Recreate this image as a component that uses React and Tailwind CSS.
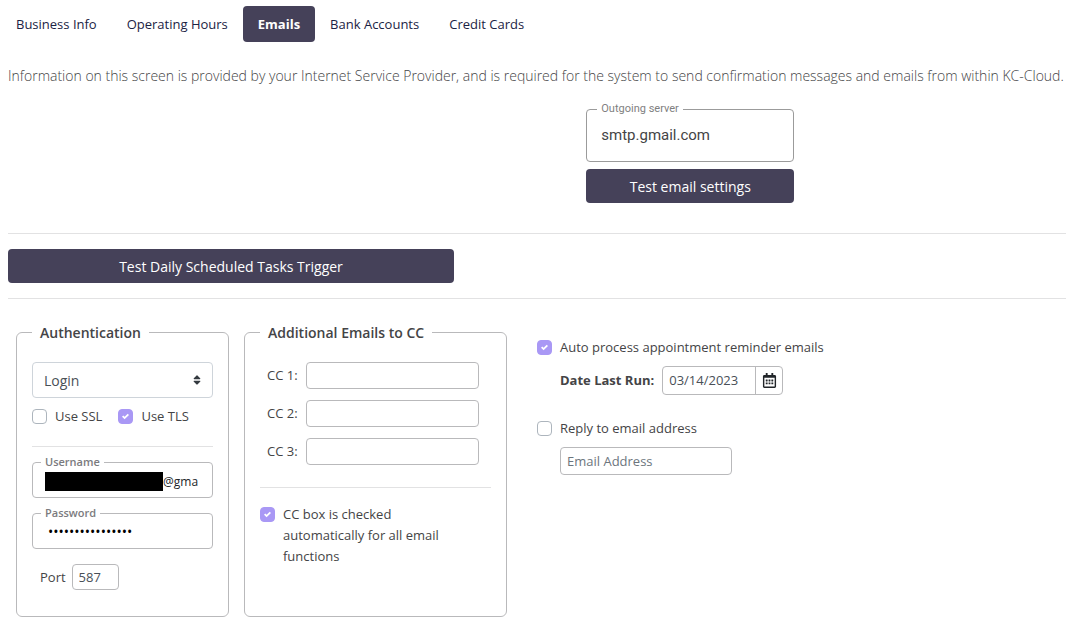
import React, { useState } from "react";
import clsx from "clsx";
import { FaRegCalendarAlt, FaSort } from "react-icons/fa";

const tabs = [
  "Business Info",
  "Operating Hours",
  "Emails",
  "Bank Accounts",
  "Credit Cards",
];

const inputStyle = "rounded border border-[#b9b9bb] bg-white px-1.5 text-[#495057]";

const Checkbox = ({ id, label, defaultChecked = false }) => {
  const [checked, setChecked] = useState(defaultChecked);

  return (
    <div className="flex items-start gap-2">
      <span className="mt-[3px] grid size-[15px] shrink-0 place-items-center">
        <input
          id={id}
          type="checkbox"
          checked={checked}
          onChange={() => setChecked(!checked)}
          className="size-[15px] appearance-none rounded border border-[#adb5bd] bg-white [grid-area:1/1] checked:border-[#a998f5] checked:bg-[#a998f5]"
        />
        {checked && (
          <svg
            viewBox="0 0 8 8"
            className="pointer-events-none size-[7px] fill-white [grid-area:1/1]"
          >
            <path d="M6.564.75l-3.59 3.612-1.538-1.55L0 4.26 2.974 7.25 8 2.193z" />
          </svg>
        )}
      </span>
      <label htmlFor={id}>{label}</label>
    </div>
  );
};

const Group = ({ title, className, children }) => (
  <fieldset
    className={clsx("rounded-md border border-[#b9b9bb] px-[15px]", className)}
  >
    <legend className="px-2 pt-0.5 text-[14px] leading-6 font-semibold">
      {title}
    </legend>
    {children}
  </fieldset>
);

const Outlined = ({ title, className, children }) => (
  <fieldset className={clsx("rounded border border-[#b9b9bb] px-2", className)}>
    <legend className="px-1 text-[11px] leading-[18px] font-semibold text-[#7b7b7e]">
      {title}
    </legend>
    {children}
  </fieldset>
);

const Tabs = () => {
  const [active, setActive] = useState("Emails");

  return (
    <nav className="flex px-px pt-1.5">
      {tabs.map((tab) => (
        <button
          key={tab}
          type="button"
          onClick={() => setActive(tab)}
          className={clsx(
            "h-9 rounded px-[15px]",
            tab === active
              ? "bg-[#454159] font-bold text-white"
              : "text-[#1b2344]"
          )}
        >
          {tab}
        </button>
      ))}
    </nav>
  );
};

const Authentication = () => (
  <Group title="Authentication" className="w-[213px]">
    <div className="mt-[17px] grid items-center">
      <select
        aria-label="Authentication type"
        className="h-9 w-full appearance-none rounded border border-[#ced4da] bg-white px-[11px] text-[14px] text-[#495057] [grid-area:1/1]"
      >
        <option>Login</option>
      </select>
      <FaSort className="pointer-events-none mr-2.5 size-3 justify-self-end text-[#343a40] [grid-area:1/1]" />
    </div>

    <div className="mt-2 flex gap-4">
      <Checkbox id="ssl" label="Use SSL" />
      <Checkbox id="tls" label="Use TLS" defaultChecked />
    </div>

    <hr className="mt-[19px] border-[#e2e2e3]" />

    <Outlined title="Username" className="mt-1.5 h-[45px]">
      <div className="flex h-5 items-center pr-1.5 pl-1">
        <span className="h-[19px] w-[118px] shrink-0 bg-black" />
        <input
          aria-label="Username"
          defaultValue="@gmail.com"
          className="w-full min-w-0 text-[12px] text-[#212529]"
        />
      </div>
    </Outlined>

    <Outlined title="Password" className="mt-1.5 h-[45px]">
      <input
        aria-label="Password"
        type="password"
        defaultValue="abcdefghijklmnop"
        className="block h-[18px] w-full px-[7px] text-[14px] text-black"
      />
    </Outlined>

    <div className="mt-[15px] mb-[26px] flex items-center gap-1.5 pl-2">
      <label htmlFor="port">Port</label>
      <input
        id="port"
        defaultValue="587"
        className={clsx(inputStyle, "h-[26px] w-[47px]")}
      />
    </div>
  </Group>
);

const AdditionalEmails = () => (
  <Group title="Additional Emails to CC" className="w-[263px]">
    <div className="mt-[17px] mr-3 ml-[7px] flex flex-col gap-[11px]">
      {[1, 2, 3].map((n) => (
        <div key={n} className="flex items-center justify-between">
          <label htmlFor={`cc${n}`}>CC {n}:</label>
          <input
            id={`cc${n}`}
            className={clsx(inputStyle, "h-[27px] w-[173px]")}
          />
        </div>
      ))}
    </div>

    <hr className="mt-[22px] mb-4 border-[#e2e2e3]" />

    <div className="pr-10">
      <Checkbox
        id="ccAll"
        label="CC box is checked automatically for all email functions"
        defaultChecked
      />
    </div>
  </Group>
);

const Reminders = () => (
  <div className="ml-[30px] pt-[18px]">
    <Checkbox
      id="reminders"
      label="Auto process appointment reminder emails"
      defaultChecked
    />

    <div className="mt-2 flex items-center gap-2 pl-[23px]">
      <label htmlFor="lastRun" className="font-bold">
        Date Last Run:
      </label>
      <div className="flex h-[29px] rounded border border-[#b9b9bb]">
        <input
          id="lastRun"
          defaultValue="03/14/2023"
          className="w-[92px] px-1.5 text-[#495057]"
        />
        <button
          type="button"
          aria-label="Pick a date"
          className="flex w-[27px] items-center justify-center border-l border-[#b9b9bb] text-[#212529]"
        >
          <FaRegCalendarAlt className="size-[15px]" />
        </button>
      </div>
    </div>

    <div className="mt-[23px]">
      <Checkbox id="replyTo" label="Reply to email address" />
    </div>
    <div className="mt-2 pl-[23px]">
      <input
        aria-label="Email Address"
        placeholder="Email Address"
        className={clsx(
          inputStyle,
          "h-7 w-[172px] placeholder:text-[#6c757d]"
        )}
      />
    </div>
  </div>
);

export default function App() {
  return (
    <main className="bg-white font-['Open_Sans',sans-serif] text-[13px] leading-[21px] text-[#444446]">
      <Tabs />

      <p className="mt-[23px] pl-2 text-[14px] font-light">
        Information on this screen is provided by your Internet Service
        Provider, and is required for the system to send confirmation messages
        and emails from within KC-Cloud.
      </p>

      <div className="mt-[15px] ml-[55%] w-[208px]">
        <fieldset className="h-[61px] rounded border border-[#9b9b9b] px-2.5 font-[Roboto,sans-serif]">
          <legend className="px-1 text-[11px] leading-4 text-[#7f7f7f]">
            Outgoing server
          </legend>
          <input
            aria-label="Outgoing server"
            defaultValue="smtp.gmail.com"
            className="mt-2 block w-full px-1 text-[15px]"
          />
        </fieldset>
        <button
          type="button"
          className="mt-[7px] h-[34px] w-full rounded bg-[#454159] text-[14px] font-medium text-white"
        >
          Test email settings
        </button>
      </div>

      <div className="mt-[30px] ml-2 border-y border-[#e2e2e3] py-[15px]">
        <button
          type="button"
          className="block h-[34px] w-[446px] max-w-full rounded bg-[#454159] text-[14px] text-white"
        >
          Test Daily Scheduled Tasks Trigger
        </button>
      </div>

      <div className="mt-5 flex pl-4">
        <Authentication />
        <div className="ml-[15px] flex">
          <AdditionalEmails />
        </div>
        <Reminders />
      </div>
    </main>
  );
}
